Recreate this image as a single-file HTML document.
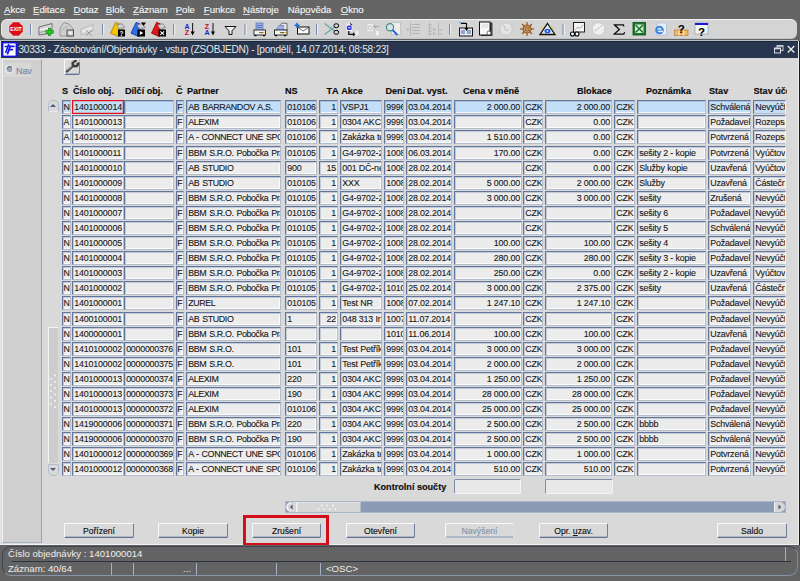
<!DOCTYPE html>
<html><head><meta charset="utf-8">
<style>
*{box-sizing:border-box;margin:0;padding:0}
html,body{width:800px;height:581px;overflow:hidden;background:#636363;font-family:"Liberation Sans",sans-serif;position:relative}
.abs{position:absolute}
#menubar{position:absolute;left:0;top:0;width:800px;height:19px;background:#656565}
.m{position:absolute;top:4px;font-size:9.6px;color:#f6f6f6;line-height:12px;white-space:nowrap;-webkit-text-stroke:0.12px #f6f6f6}
#toolbar{position:absolute;left:1px;top:19px;width:796px;height:20px;background:#d4d4d4;border-radius:6px;border-top:1px solid #f0f0f0;border-left:1px solid #e8e8e8;border-bottom:1px solid #c4c4c4}
#tbline{position:absolute;left:0;top:39px;width:798px;height:2px;background:#b6bdc5;border-top:1px solid #5d666c}
#win{position:absolute;left:0;top:41px;width:799px;height:504px;background:#d9d9d9;border-left:1px solid #e4e4e4}
#title{position:absolute;left:1px;top:41px;width:797px;height:17px;background:#28374f;border-top:1px solid #1c2434}
#ttext{position:absolute;left:18.5px;top:43px;font-size:10.1px;letter-spacing:-0.255px;color:#e6e6e6;line-height:13px;white-space:nowrap}
#ticon{position:absolute;left:3px;top:42px;width:14px;height:14px;background:#fff;border:1px solid #1a2ad0}
#rborder{position:absolute;left:798px;top:41px;width:2px;height:505px;background:#1a1a1a;border-left:1px solid #ececec}
#nav{position:absolute;left:2px;top:59px;width:40px;height:484px;background:#cfcfcf;border-left:1px solid #f4f4f4;border-right:1px solid #95a3b8;border-bottom:1px solid #a3afc2;border-top:1px solid #e4e4e4}
#wbot{position:absolute;left:0;top:544px;width:798px;height:1px;background:#f2f2f2}
#navbtn{position:absolute;left:4px;top:63px;width:27px;height:14px;background:#d8d8d8}
#navtxt{position:absolute;left:16px;top:64.5px;font-size:8.9px;color:#8090a8;line-height:12px;-webkit-text-stroke:0.25px #8090a8}
.h{position:absolute;top:85.5px;font-size:9.1px;font-weight:bold;color:#0c0c0c;line-height:11px;white-space:nowrap;-webkit-text-stroke:0.15px #0c0c0c}
.f{position:absolute;height:14px;background:#ececec;border-top:1px solid #62759a;border-left:1px solid #62759a;border-right:1px solid #b3bdcc;border-bottom:1px solid #b3bdcc;box-shadow:inset 1px 1px 0 #c3cbd8,inset -1px -1px 0 #fbfbfb;overflow:hidden;white-space:nowrap;font-size:8.9px;color:#161616;line-height:11px;-webkit-text-stroke:0.1px #161616;letter-spacing:-0.16px}
.f span{position:absolute;top:1.35px}
.f.l span{left:1.2px}
.f.r span{right:1px}
.f.c span{left:0;right:0;text-align:center}
.f.s{background:#c3dff7;box-shadow:inset 1px 1px 0 #a8bfd8,inset 0 -1px 0 #f4f8fc}
.f.red{border:1px solid #e4101c;box-shadow:inset 0 0 0 0.5px rgba(228,40,50,0.55)}
.h, .m{font-kerning:none}
#status{position:absolute;left:0;top:545px;width:800px;height:36px;background:#636363}
#spanel{position:absolute;left:2px;top:546px;width:796px;height:30px;border:1px solid #3d4350;border-radius:9px;border-bottom-color:#8794aa;border-right-color:#7f8ca3}
#sdiv{position:absolute;left:12px;top:561px;width:779px;height:1px;background:#2c3442}
.st{position:absolute;font-size:9.6px;color:#eeeeee;line-height:12px;white-space:nowrap}
.vs{position:absolute;width:1px;background:#a4b0c4}
.btn{position:absolute;top:523px;height:15px;background:#d9d9d9;border-top:1px solid #fafafa;border-left:1px solid #fafafa;border-right:1px solid #6f7f99;border-bottom:1px solid #62728e;box-shadow:inset 0 -1px 0 #aeb8c8;border-radius:1.5px;font-size:8.6px;color:#111;text-align:center;line-height:14px;white-space:nowrap;-webkit-text-stroke:0.15px #161616}
.btn.dis{color:#8696ad;-webkit-text-stroke:0.15px #8696ad;border-bottom:1px dotted #8a98ad;border-right:1px solid #e0e0e0}
#redbox{position:absolute;left:243px;top:515px;width:86px;height:31px;border:3px solid #d50d1b}
#sb{position:absolute;left:285px;top:501px;width:501px;height:12px;background:#8b9bb5}
#sbl{position:absolute;left:285px;top:501px;width:11px;height:12px;background:#d6d6d6;border-radius:6px 0 0 6px;border:1px solid #b0bac8}
#sbthumb{position:absolute;left:296px;top:501px;width:65px;height:12px;background:#d6d6d6;border-left:2px solid #f4f4f4;border-top:1px solid #e6e6e6}
#sbr{position:absolute;left:774px;top:501px;width:12px;height:12px;background:#d6d6d6;border-radius:0 6px 6px 0;border:1px solid #b0bac8}
.kf{position:absolute;top:479px;height:15px;background:#e8e8e8;border-top:1px solid #7d8ea9;border-left:1px solid #7d8ea9;border-right:1px solid #f6f6f6;border-bottom:1px solid #f6f6f6;border-radius:2px}
#vup{position:absolute;left:47.5px;top:100px;width:11px;height:12px;background:#d9d9d9;border:1px solid #b3bccb;border-radius:5px 5px 1px 1px;border-bottom-color:#e8e8e8}
#vupa{position:absolute;left:49.5px;top:103.5px;width:0;height:0;border-left:3.5px solid transparent;border-right:3.5px solid transparent;border-bottom:3.5px solid #4a5d7c}
#vdn{position:absolute;left:47.5px;top:464px;width:11px;height:12px;background:#d9d9d9;border:1px solid #b3bccb;border-radius:1px 1px 5px 5px}
#vdna{position:absolute;left:49.5px;top:468px;width:0;height:0;border-left:3.5px solid transparent;border-right:3.5px solid transparent;border-top:3.5px solid #4a5d7c}
#vthumb{position:absolute;left:48px;top:327px;width:10px;height:136px;background:#cdcdcd;border-top:1px solid #f4f4f4;border-left:1px solid #f4f4f4}
.m u{text-decoration:underline;text-decoration-color:#d8d8d8;text-underline-offset:1px}
#wrench{position:absolute;left:64px;top:59px;width:16px;height:16px;border-top:1px solid #fafafa;border-left:1px solid #fafafa;border-right:1px solid #6f7f99;border-bottom:1px solid #62728e;box-shadow:inset 0 -1px 0 #aeb8c8;border-radius:2px}
</style></head><body>
<div id="menubar"></div>
<div class="m" style="left:4px"><u>A</u>kce</div>
<div class="m" style="left:33px"><u>E</u>ditace</div>
<div class="m" style="left:73.6px"><u>D</u>otaz</div>
<div class="m" style="left:105.8px"><u>B</u>lok</div>
<div class="m" style="left:133px"><u>Z</u>áznam</div>
<div class="m" style="left:175.7px"><u>P</u>ole</div>
<div class="m" style="left:203.8px"><u>F</u>unkce</div>
<div class="m" style="left:243px"><u>N</u>ástroje</div>
<div class="m" style="left:287.7px">Náp<u>o</u>věda</div>
<div class="m" style="left:340.7px"><u>O</u>kno</div>
<div id="toolbar"></div>
<div id="tbline"></div>
<svg id="tbsvg" style="position:absolute;left:0;top:0" width="800" height="41" viewBox="0 0 800 41">
<!-- separators -->
<g fill="#7a8cb0">
<rect x="30" y="24" width="1.2" height="11"/><rect x="102" y="24" width="1.2" height="11"/><rect x="173" y="24" width="1.2" height="11"/><rect x="244.5" y="24" width="1.2" height="11"/><rect x="316" y="24" width="1.2" height="11"/><rect x="449" y="24" width="1.2" height="11"/><rect x="562.5" y="24" width="1.2" height="11"/>
</g>
<g fill="#f4f4f4">
<rect x="31.2" y="24" width="1" height="11"/><rect x="103.2" y="24" width="1" height="11"/><rect x="174.2" y="24" width="1" height="11"/><rect x="245.7" y="24" width="1" height="11"/><rect x="317.2" y="24" width="1" height="11"/><rect x="450.2" y="24" width="1" height="11"/><rect x="563.7" y="24" width="1" height="11"/>
</g>
<!-- EXIT -->
<polygon points="13.2,21.9 18.8,21.9 23,26.1 23,31.8 18.8,36 13.2,36 9,31.8 9,26.1" fill="#dc0e1c" stroke="#f2f2f2" stroke-width="0.5"/>
<text x="16" y="31" font-family="Liberation Sans" font-weight="bold" font-size="5.2" fill="#fff" text-anchor="middle">EXIT</text>
<!-- new record -->
<g>
<polygon points="39,27 52,23.5 52,33 39,35" fill="#d8d8d8" stroke="#6e6e6e" stroke-width="1"/>
<line x1="39.5" y1="30" x2="51.5" y2="27" stroke="#f8f8f8" stroke-width="1"/>
<line x1="39.5" y1="32.5" x2="51.5" y2="30" stroke="#8a8a8a" stroke-width="0.8"/>
<rect x="46" y="30.6" width="7.2" height="2.6" fill="#10a010" stroke="#0a5a0a" stroke-width="0.4"/>
<rect x="48.3" y="28" width="2.6" height="7.5" fill="#10a010" stroke="#0a5a0a" stroke-width="0.4"/>
<rect x="46.4" y="31" width="6.4" height="1.8" fill="#20d020"/><rect x="48.7" y="28.4" width="1.8" height="6.7" fill="#20d020"/>
</g>
<!-- delete record (disabled) -->
<g>
<polygon points="60,36 60,28 64,22.5 69,24 73,28.5 73,36" fill="#cfcfcf" stroke="#8f8f8f" stroke-width="0.9"/>
<line x1="61" y1="30" x2="68" y2="26" stroke="#a0a0a0" stroke-width="0.8"/>
<rect x="67" y="30" width="6.5" height="6" fill="#d0d0d0" stroke="#505050" stroke-width="1"/>
<polygon points="68.5,33 71.5,31 71.5,35" fill="#f8f8f8"/>
</g>
<!-- disabled 3 -->
<g stroke="#b8b8b8" fill="none" stroke-width="1">
<polygon points="81,29 93,24.5 93,31 81,35" fill="#dcdcdc"/>
<line x1="82" y1="31.5" x2="92" y2="28" stroke="#f6f6f6"/>
<line x1="86" y1="30" x2="92" y2="36" stroke="#9a9a9a"/><line x1="92" y1="30" x2="86" y2="36" stroke="#9a9a9a"/>
</g>
<!-- yellow folder -->
<g transform="translate(0,0)">
<polygon points="110.5,33.2 115.6,22.4 119.2,23.8 119.5,29.5 118.3,36.6" fill="#f4c400" stroke="#b07800" stroke-width="0.8"/>
<polygon points="116.8,24.8 121.8,23.6 124.6,27.4 119.3,29.6" fill="#c4c4c4" stroke="#6a6a6a" stroke-width="0.6"/>
<line x1="117.5" y1="26.6" x2="122.5" y2="25.6" stroke="#f4f4f4" stroke-width="0.6"/>
<rect x="118" y="29.5" width="7" height="7" fill="#000"/><text x="121.5" y="35.7" font-family="Liberation Sans" font-weight="bold" font-size="6.5" fill="#fff" text-anchor="middle">?</text>
</g>
<!-- blue folder -->
<g transform="translate(20.5,0)">
<polygon points="110.5,33.2 115.6,22.4 119.2,23.8 119.5,29.5 118.3,36.6" fill="#2a6ee8" stroke="#0c2aa0" stroke-width="0.8"/>
<polygon points="116.8,24.8 121.8,23.6 124.6,27.4 119.3,29.6" fill="#c4c4c4" stroke="#6a6a6a" stroke-width="0.6"/>
<line x1="117.5" y1="26.6" x2="122.5" y2="25.6" stroke="#f4f4f4" stroke-width="0.6"/>
<polygon points="120.5,22.5 125.5,22.5 123,26" fill="#000"/><rect x="117" y="29.5" width="7.5" height="7" fill="#000"/><polygon points="119.3,31 119.3,35 122.8,33" fill="#fff"/>
</g>
<!-- red folder -->
<g transform="translate(41,0)">
<polygon points="110.5,33.2 115.6,22.4 119.2,23.8 119.5,29.5 118.3,36.6" fill="#e41414" stroke="#8a0000" stroke-width="0.8"/>
<polygon points="116.8,24.8 121.8,23.6 124.6,27.4 119.3,29.6" fill="#c4c4c4" stroke="#6a6a6a" stroke-width="0.6"/>
<line x1="117.5" y1="26.6" x2="122.5" y2="25.6" stroke="#f4f4f4" stroke-width="0.6"/>
<rect x="117.5" y="29.5" width="7.5" height="7" fill="#000"/><path d="M119.3 31.3 L123.2 34.8 M123.2 31.3 L119.3 34.8" stroke="#fff" stroke-width="1.1"/>
</g>
<!-- AZ sort -->
<g font-family="Liberation Sans" font-weight="bold" font-size="7" text-anchor="middle">
<text x="187" y="29" fill="#1a2ab8">A</text>
<text x="187" y="35.1" fill="#c01010">Z</text>
<text x="207" y="29" fill="#c01010">Z</text>
<text x="207" y="35.1" fill="#1a2ab8">A</text>
</g>
<g fill="#000" stroke="#000">
<line x1="192.6" y1="23" x2="192.6" y2="33" stroke-width="0.9"/><polygon points="190.6,31.5 194.6,31.5 192.6,35.5" stroke="none"/>
<line x1="213" y1="23" x2="213" y2="33" stroke-width="0.9"/><polygon points="211,31.5 215,31.5 213,35.5" stroke="none"/>
</g>
<!-- filter -->
<polygon points="225,26.5 236,26.5 232,30.8 232,34.5 229,34.5 229,30.8" fill="#f4f4f4" stroke="#111" stroke-width="1"/>
<!-- printer -->
<g>
<rect x="256" y="23" width="7" height="7.5" fill="#9cb0e8" stroke="#5060a0" stroke-width="0.6"/>
<line x1="257" y1="25.5" x2="262" y2="25.5" stroke="#3848a0" stroke-width="0.6"/><line x1="257" y1="27.5" x2="262" y2="27.5" stroke="#3848a0" stroke-width="0.6"/>
<rect x="254" y="30" width="11.5" height="5" fill="#f4f4f4" stroke="#202020" stroke-width="0.9"/>
<rect x="259" y="32" width="1.8" height="1.2" fill="#20b020"/><rect x="261" y="32" width="1.8" height="1.2" fill="#e02020"/><rect x="263" y="32" width="1.5" height="1.2" fill="#e0c000"/>
<rect x="254.5" y="35" width="2" height="1.2" fill="#000"/><rect x="263" y="35" width="2" height="1.2" fill="#000"/>
</g>
<!-- printer 2 -->
<g>
<polygon points="277,30 282,23 287,23.5 287,30" fill="#e8e8e8" stroke="#404040" stroke-width="0.7"/>
<polygon points="276,30 279,25.5 284,25.5 283,30" fill="#9cb0e8" stroke="#5060a0" stroke-width="0.5"/>
<rect x="274.5" y="30" width="12.5" height="5" fill="#f4f4f4" stroke="#202020" stroke-width="0.9"/>
<rect x="280" y="32" width="2" height="1.2" fill="#20b020"/><rect x="282" y="32" width="2" height="1.2" fill="#e02020"/><rect x="284" y="32" width="2" height="1.2" fill="#e0c000"/>
<rect x="275" y="35" width="2" height="1.2" fill="#000"/><rect x="284" y="35" width="2" height="1.2" fill="#000"/>
</g>
<!-- mail -->
<g>
<rect x="297.5" y="27" width="11.5" height="7" fill="#fafafa" stroke="#111" stroke-width="1"/>
<polyline points="298,27.5 303.2,31 308.5,27.5" fill="none" stroke="#333" stroke-width="0.7"/>
<rect x="294.5" y="24.5" width="5" height="1.6" fill="#1a6ae0"/><rect x="296.2" y="22.8" width="1.6" height="5" fill="#1a6ae0"/>
</g>
<!-- scissors -->
<g>
<line x1="324.5" y1="23.5" x2="334" y2="30.5" stroke="#6aa8a8" stroke-width="1.4"/>
<line x1="324.5" y1="34.5" x2="334" y2="27.5" stroke="#6aa8a8" stroke-width="1.4"/>
<ellipse cx="336.3" cy="25.7" rx="2.4" ry="2" fill="none" stroke="#000" stroke-width="1"/>
<ellipse cx="336.3" cy="32.3" rx="2.4" ry="2" fill="none" stroke="#000" stroke-width="1"/>
</g>
<!-- copy -->
<g>
<rect x="346.3" y="23.3" width="6" height="8" fill="#f4f4fa" stroke="#d8d8e8" stroke-width="0.5"/>
<rect x="347" y="25.5" width="4.6" height="4.6" rx="1.6" fill="#2222f0"/>
<rect x="348.2" y="27.2" width="2.3" height="1.2" fill="#f0f0ff"/>
<polygon points="350,22.5 352.5,25 350.8,25.5" fill="#111"/>
<path d="M348.8 31 L348.8 34.3 L353.5 34.3" fill="none" stroke="#111" stroke-width="1.3"/>
<polygon points="353,32.2 355.6,34.3 353,36.4" fill="#111"/>
<rect x="355.3" y="30.5" width="3.6" height="5" rx="1" fill="#f2f2f2" stroke="#d0d0d0" stroke-width="0.5"/>
</g>
<!-- paste disabled -->
<g>
<rect x="367" y="23.3" width="6.2" height="8.5" fill="#f0f0f0" stroke="#c8c8c8" stroke-width="0.6"/>
<rect x="368.3" y="26" width="3.6" height="3.5" rx="1.2" fill="none" stroke="#b4b4b4" stroke-width="0.8"/>
<path d="M379 26.5 L374.5 26.5" stroke="#a8a8a8" stroke-width="1.1"/>
<polygon points="375.5,24.6 373.3,26.5 375.5,28.4" fill="#a8a8a8"/>
<rect x="375.5" y="30.5" width="3.8" height="5.2" rx="1" fill="#f2f2f2" stroke="#c8c8c8" stroke-width="0.5"/>
</g>
<!-- search -->
<g>
<rect x="391.5" y="22.5" width="9" height="12" fill="#ececec" stroke="#b8b8b8" stroke-width="0.7"/>
<circle cx="390" cy="27.2" r="3.6" fill="#d4e6e6" stroke="#4a8a8a" stroke-width="1.2"/>
<line x1="392.5" y1="30" x2="397.5" y2="35" stroke="#1a60e0" stroke-width="1.8"/>
</g>
<!-- disabled list -->
<g stroke="#b2b2b2" stroke-width="0.9">
<line x1="410.5" y1="22.5" x2="410.5" y2="36"/>
<line x1="412" y1="24.5" x2="420" y2="24.5"/><line x1="412" y1="27.5" x2="420" y2="27.5"/><line x1="412" y1="30.5" x2="420" y2="30.5"/><line x1="412" y1="33.5" x2="420" y2="33.5"/>
<polygon points="407,28 409.5,29.5 407,31" fill="#b2b2b2" stroke="none"/>
</g>
<!-- disabled tree -->
<g stroke="#b6b6b6" stroke-width="0.9">
<line x1="429.5" y1="22.5" x2="429.5" y2="36"/><line x1="438.5" y1="22.5" x2="438.5" y2="36"/>
<line x1="428" y1="25" x2="432" y2="25"/><line x1="428" y1="28" x2="432" y2="28"/><line x1="428" y1="31" x2="432" y2="31"/><line x1="428" y1="34" x2="432" y2="34"/>
<polygon points="433,28 436,29.5 433,31" fill="#b0b0b0" stroke="none"/><polygon points="433,32 436,33.5 433,35" fill="#b0b0b0" stroke="none"/>
<line x1="439" y1="30" x2="442" y2="30"/><line x1="439" y1="34" x2="442" y2="34"/>
</g>
<!-- import -->
<g>
<rect x="459.5" y="28" width="13" height="8" fill="#e8e8f4" stroke="#111" stroke-width="1"/>
<rect x="461" y="30" width="4" height="4" fill="#90a8c8"/><rect x="467" y="30" width="4" height="4" fill="#90a8c8"/>
<line x1="459" y1="22.5" x2="466" y2="22.5" stroke="#5a9ae0" stroke-width="0.8"/>
<path d="M461 23.5 L466.5 23.5 L466.5 29" fill="none" stroke="#000" stroke-width="1.1"/>
<polygon points="464.5,28 468.5,28 466.5,31" fill="#000"/>
</g>
<!-- document -->
<g>
<rect x="481" y="22.5" width="11.5" height="13.5" fill="#404040"/>
<rect x="479.5" y="22" width="10.5" height="13" fill="#f8f8f8" stroke="#111" stroke-width="1"/>
<line x1="481.5" y1="25" x2="488" y2="25" stroke="#c0c0c0" stroke-width="0.6"/><line x1="481.5" y1="27" x2="488" y2="27" stroke="#c0c0c0" stroke-width="0.6"/>
<circle cx="489" cy="33" r="2" fill="#fff" stroke="#333" stroke-width="0.7"/>
</g>
<!-- globe disabled -->
<circle cx="506" cy="29" r="6.2" fill="#e4e4e4" stroke="#c0c0c0" stroke-width="0.8"/>
<path d="M503 25 Q506 27 505 30 Q507 32 509 29" fill="none" stroke="#b0b0b0" stroke-width="0.8"/>
<!-- ship wheel -->
<g stroke="#9a5a1a" stroke-width="1.2" fill="none">
<circle cx="527" cy="29" r="4"/>
<line x1="520" y1="29" x2="534" y2="29"/><line x1="527" y1="22" x2="527" y2="36"/>
<line x1="522" y1="24" x2="532" y2="34"/><line x1="532" y1="24" x2="522" y2="34"/>
</g>
<circle cx="527" cy="29" r="1.5" fill="#d08a40"/>
<!-- eye pyramid -->
<g>
<line x1="541" y1="27" x2="543" y2="28.5" stroke="#e8d000" stroke-width="1"/><line x1="554" y1="27" x2="552" y2="28.5" stroke="#e8d000" stroke-width="1"/>
<polygon points="547.5,23.5 555,34.5 540,34.5" fill="#e8e8e8" stroke="#101010" stroke-width="1.3"/>
<ellipse cx="547.5" cy="31" rx="3" ry="2.3" fill="#1a58f0"/>
<circle cx="547.5" cy="31" r="1" fill="#bfe0ff"/>
</g>
<!-- chart glasses -->
<g>
<rect x="573.5" y="22.5" width="11" height="9.5" fill="#f4f4f4" stroke="#202020" stroke-width="1"/>
<polyline points="575,30 578,27 580,28.5 583,24.5" fill="none" stroke="#909090" stroke-width="0.7"/>
<circle cx="572.5" cy="34" r="2" fill="#fff" stroke="#000" stroke-width="1.1"/>
<circle cx="577" cy="34" r="2" fill="#fff" stroke="#000" stroke-width="1.1"/>
</g>
<!-- disabled chart -->
<circle cx="598.5" cy="29" r="6.3" fill="#f0f0f0" stroke="#c6c6c6" stroke-width="0.8"/>
<polyline points="594,31 598,29 602,25" fill="none" stroke="#b8b8b8" stroke-width="0.8"/>
<!-- sigma -->
<path d="M613.5 24.3 L624 24.3 L624.4 26.6 L623.4 26.6 L622.6 25.4 L616.3 25.4 L620.3 29.6 L615.8 33.6 L623.2 33.6 L624.4 32 L625.2 32 L624.3 34.7 L613.3 34.7 L613.3 34 L618.4 29.5 L613.5 24.9 Z" fill="#101010"/>
<!-- excel -->
<g>
<rect x="633" y="22.5" width="12.5" height="12.5" fill="#1c7a2c" stroke="#0a4a14" stroke-width="0.8"/>
<rect x="635" y="24.5" width="8.5" height="8.5" fill="#d8ecd8"/>
<path d="M635.5 25 L643 32.5 M643 25 L635.5 32.5" stroke="#1c7a2c" stroke-width="1.6"/>
</g>
<!-- IE -->
<g>
<rect x="657" y="23" width="9.5" height="12" fill="#e8eef8" stroke="#a0b0d0" stroke-width="0.6"/>
<circle cx="659.5" cy="30" r="4.3" fill="#3a86e0"/>
<circle cx="659.5" cy="30" r="2.2" fill="#e0ecff"/>
<rect x="657" y="29.6" width="5" height="1.1" fill="#3a86e0"/>
<rect x="659" y="30.7" width="4" height="1.4" fill="#e0ecff"/>
</g>
<!-- help lock -->
<g>
<rect x="674.5" y="30" width="13.5" height="5.5" fill="#f0b860" stroke="#b07020" stroke-width="0.6"/>
<rect x="678.5" y="30.5" width="1.2" height="5" fill="#e8e8e8"/><rect x="683" y="30.5" width="1.2" height="5" fill="#e8e8e8"/>
<text x="681.3" y="33" font-family="Liberation Sans" font-weight="bold" font-size="11.5" fill="#000" text-anchor="middle">?</text>
</g>
<!-- help window -->
<g>
<rect x="695" y="23" width="13" height="11" fill="#f4f4f4" stroke="#8090b0" stroke-width="0.6"/>
<rect x="695" y="23" width="13" height="2" fill="#1a1ad0"/>
<text x="701.5" y="36" font-family="Liberation Sans" font-weight="bold" font-size="11.5" fill="#000" text-anchor="middle">?</text>
</g>
</svg>

<div id="win"></div>
<div id="title"></div>

<svg style="position:absolute;left:2px;top:42px" width="15" height="15" viewBox="0 0 15 15"><rect x="0.7" y="0.7" width="13.6" height="13.6" fill="#fdfdfd" stroke="#1414e0" stroke-width="1.4"/><g stroke="#1818e8" stroke-linecap="round" fill="none"><path d="M3.2 4.5 L6 4.5" stroke-width="1.5"/><path d="M6.6 2.6 L3.8 10.2" stroke-width="1.6"/><path d="M8.2 4.2 L5.6 11.6" stroke-width="1.9"/><path d="M7.6 4.3 L12 4.3" stroke-width="1.7"/><path d="M7 7.6 L10.6 7.6" stroke-width="1.6"/></g></svg>
<div id="ttext">30333 - Zásobování/Objednávky - vstup (ZSOBJEDN) - [pondělí, 14.07.2014; 08:58:23]</div>
<div id="rborder"></div>
<svg style="position:absolute;left:772px;top:43px" width="26" height="13" viewBox="0 0 26 13"><rect x="5" y="2.5" width="6" height="5" fill="none" stroke="#c8ccd4" stroke-width="1"/><rect x="5" y="2.5" width="6" height="1.3" fill="#c8ccd4"/><rect x="2.5" y="5" width="6" height="5" fill="#28374f" stroke="#d8dce4" stroke-width="1"/><rect x="2.5" y="5" width="6" height="1.3" fill="#d8dce4"/><path d="M15.8 3 L22.3 9.5 M22.3 3 L15.8 9.5" stroke="#f0f0f0" stroke-width="1.3"/></svg>
<div id="nav"></div><div id="wbot"></div>
<div id="navbtn"></div>
<div id="navtxt">Nav</div>
<svg style="position:absolute;left:4px;top:63px" width="12" height="14" viewBox="0 0 12 14"><circle cx="5.5" cy="6.5" r="3.6" fill="#9aa6b8" stroke="#f2f2f2" stroke-width="1.2"/><path d="M3 5.5 A3 3 0 0 1 8 4.5" stroke="#3c4a66" stroke-width="1" fill="none"/></svg>
<div id="wrench"></div>
<svg style="position:absolute;left:64px;top:58px" width="17" height="17" viewBox="0 0 17 17"><path d="M3 13.3 L9.2 7.6" stroke="#484848" stroke-width="2.6" stroke-linecap="round"/><path d="M3.2 12.2 L8.4 7.3" stroke="#f0f0f0" stroke-width="0.8"/><circle cx="11.3" cy="5.6" r="3.9" fill="#3c3c3c"/><polygon points="11.3,5.6 13.8,1 16.5,3.5" fill="#d9d9d9"/><circle cx="11.2" cy="5.7" r="1.3" fill="#d9d9d9"/><path d="M8 4 A3.6 3.6 0 0 1 10.2 2.1" stroke="#e8e8e8" stroke-width="0.8" fill="none"/></svg>
<div class="h" style="left:62px">S</div>
<div class="h" style="left:73px">Číslo obj.</div>
<div class="h" style="left:125px">Dílčí obj.</div>
<div class="h" style="left:176px">Č</div>
<div class="h" style="left:187px">Partner</div>
<div class="h" style="left:285px">NS</div>
<div class="h" style="left:326.5px">TA Akce</div>
<div class="h" style="left:385.5px">Deni</div>
<div class="h" style="left:407px">Dat. vyst.</div>
<div class="h" style="left:463px">Cena v měně</div>
<div class="h" style="left:577px">Blokace</div>
<div class="h" style="left:646px">Poznámka</div>
<div class="h" style="left:709px">Stav</div>
<div class="h" style="left:753.5px;width:33px;overflow:hidden">Stav účet</div>
<div id="vup"></div><div id="vupa"></div>
<div id="vthumb"></div>
<svg style="position:absolute;left:47px;top:320px" width="12" height="100" viewBox="0 0 12 100"><g fill="#fafafa"><circle cx="8" cy="55.5" r="0.9"/><circle cx="4" cy="58.6" r="0.9"/><circle cx="8" cy="61.8" r="0.9"/><circle cx="4" cy="64.9" r="0.9"/><circle cx="8" cy="68.1" r="0.9"/><circle cx="4" cy="71.2" r="0.9"/><circle cx="8" cy="74.4" r="0.9"/><circle cx="4" cy="77.5" r="0.9"/><circle cx="8" cy="80.7" r="0.9"/><circle cx="4" cy="83.8" r="0.9"/><circle cx="8" cy="87.0" r="0.9"/></g></svg><div id="vdn"></div><div id="vdna"></div>
<div class="f s c" style="left:62px;top:100px;width:9px"><span>N</span></div>
<div class="f s red l" style="left:72px;top:100px;width:52px"><span>1401000014</span></div>
<div class="f s l" style="left:124px;top:100px;width:50px;letter-spacing:-0.26px"><span></span></div>
<div class="f s c" style="left:176px;top:100px;width:8px"><span>F</span></div>
<div class="f s l" style="left:186px;top:100px;width:95px;letter-spacing:-0.38px;word-spacing:0.8px"><span>AB BARRANDOV A.S.</span></div>
<div class="f s l" style="left:285px;top:100px;width:32px"><span>010106</span></div>
<div class="f s r" style="left:319px;top:100px;width:19px"><span>1</span></div>
<div class="f s l" style="left:340px;top:100px;width:42px"><span>VSPJ1</span></div>
<div class="f s l" style="left:384px;top:100px;width:20px"><span>9996</span></div>
<div class="f s l" style="left:406px;top:100px;width:46px"><span>03.04.2014</span></div>
<div class="f s r" style="left:454px;top:100px;width:68px"><span>2 000.00</span></div>
<div class="f s l" style="left:523px;top:100px;width:20px"><span>CZK</span></div>
<div class="f s r" style="left:545px;top:100px;width:67px"><span>2 000.00</span></div>
<div class="f s l" style="left:614px;top:100px;width:21px"><span>CZK</span></div>
<div class="f s l" style="left:637px;top:100px;width:69px"><span></span></div>
<div class="f s l" style="left:708px;top:100px;width:43px"><span>Schválená</span></div>
<div class="f s l" style="left:753px;top:100px;width:33px;border-right:1px solid #f4f4f4;box-shadow:inset 1px 1px 0 #c3cbd8"><span>Nevyúčt</span></div>
<div class="f c" style="left:62px;top:115px;width:9px"><span>A</span></div>
<div class="f l" style="left:72px;top:115px;width:52px"><span>1401000013</span></div>
<div class="f l" style="left:124px;top:115px;width:50px;letter-spacing:-0.26px"><span></span></div>
<div class="f c" style="left:176px;top:115px;width:8px"><span>F</span></div>
<div class="f l" style="left:186px;top:115px;width:95px;letter-spacing:-0.38px;word-spacing:0.8px"><span>ALEXIM</span></div>
<div class="f l" style="left:285px;top:115px;width:32px"><span>010106</span></div>
<div class="f r" style="left:319px;top:115px;width:19px"><span>1</span></div>
<div class="f l" style="left:340px;top:115px;width:42px"><span>0304 AKCE</span></div>
<div class="f l" style="left:384px;top:115px;width:20px"><span>9999</span></div>
<div class="f l" style="left:406px;top:115px;width:46px"><span>03.04.2014</span></div>
<div class="f r" style="left:454px;top:115px;width:68px"><span></span></div>
<div class="f l" style="left:523px;top:115px;width:20px"><span>CZK</span></div>
<div class="f r" style="left:545px;top:115px;width:67px"><span>0.00</span></div>
<div class="f l" style="left:614px;top:115px;width:21px"><span>CZK</span></div>
<div class="f l" style="left:637px;top:115px;width:69px"><span></span></div>
<div class="f l" style="left:708px;top:115px;width:43px"><span>Požadavek</span></div>
<div class="f l" style="left:753px;top:115px;width:33px;border-right:1px solid #f4f4f4;box-shadow:inset 1px 1px 0 #c3cbd8"><span>Rozepsá</span></div>
<div class="f c" style="left:62px;top:130px;width:9px"><span>A</span></div>
<div class="f l" style="left:72px;top:130px;width:52px"><span>1401000012</span></div>
<div class="f l" style="left:124px;top:130px;width:50px;letter-spacing:-0.26px"><span></span></div>
<div class="f c" style="left:176px;top:130px;width:8px"><span>F</span></div>
<div class="f l" style="left:186px;top:130px;width:95px;letter-spacing:-0.38px;word-spacing:0.8px"><span>A - CONNECT UNE SPOL</span></div>
<div class="f l" style="left:285px;top:130px;width:32px"><span>010106</span></div>
<div class="f r" style="left:319px;top:130px;width:19px"><span>1</span></div>
<div class="f l" style="left:340px;top:130px;width:42px"><span>Zakázka test</span></div>
<div class="f l" style="left:384px;top:130px;width:20px"><span>9999</span></div>
<div class="f l" style="left:406px;top:130px;width:46px"><span>03.04.2014</span></div>
<div class="f r" style="left:454px;top:130px;width:68px"><span>1 510.00</span></div>
<div class="f l" style="left:523px;top:130px;width:20px"><span>CZK</span></div>
<div class="f r" style="left:545px;top:130px;width:67px"><span>0.00</span></div>
<div class="f l" style="left:614px;top:130px;width:21px"><span>CZK</span></div>
<div class="f l" style="left:637px;top:130px;width:69px"><span></span></div>
<div class="f l" style="left:708px;top:130px;width:43px"><span>Potvrzená</span></div>
<div class="f l" style="left:753px;top:130px;width:33px;border-right:1px solid #f4f4f4;box-shadow:inset 1px 1px 0 #c3cbd8"><span>Rozepsá</span></div>
<div class="f c" style="left:62px;top:146px;width:9px"><span>N</span></div>
<div class="f l" style="left:72px;top:146px;width:52px"><span>1401000011</span></div>
<div class="f l" style="left:124px;top:146px;width:50px;letter-spacing:-0.26px"><span></span></div>
<div class="f c" style="left:176px;top:146px;width:8px"><span>F</span></div>
<div class="f l" style="left:186px;top:146px;width:95px;letter-spacing:-0.38px;word-spacing:0.8px"><span>BBM S.R.O. Pobočka Praha</span></div>
<div class="f l" style="left:285px;top:146px;width:32px"><span>010105</span></div>
<div class="f r" style="left:319px;top:146px;width:19px"><span>1</span></div>
<div class="f l" style="left:340px;top:146px;width:42px"><span>G4-9702-2</span></div>
<div class="f l" style="left:384px;top:146px;width:20px"><span>1008</span></div>
<div class="f l" style="left:406px;top:146px;width:46px"><span>06.03.2014</span></div>
<div class="f r" style="left:454px;top:146px;width:68px"><span>170.00</span></div>
<div class="f l" style="left:523px;top:146px;width:20px"><span>CZK</span></div>
<div class="f r" style="left:545px;top:146px;width:67px"><span>0.00</span></div>
<div class="f l" style="left:614px;top:146px;width:21px"><span>CZK</span></div>
<div class="f l" style="left:637px;top:146px;width:69px"><span>sešity 2 - kopie</span></div>
<div class="f l" style="left:708px;top:146px;width:43px"><span>Potvrzená</span></div>
<div class="f l" style="left:753px;top:146px;width:33px;border-right:1px solid #f4f4f4;box-shadow:inset 1px 1px 0 #c3cbd8"><span>Vyúčtov</span></div>
<div class="f c" style="left:62px;top:161px;width:9px"><span>N</span></div>
<div class="f l" style="left:72px;top:161px;width:52px"><span>1401000010</span></div>
<div class="f l" style="left:124px;top:161px;width:50px;letter-spacing:-0.26px"><span></span></div>
<div class="f c" style="left:176px;top:161px;width:8px"><span>F</span></div>
<div class="f l" style="left:186px;top:161px;width:95px;letter-spacing:-0.38px;word-spacing:0.8px"><span>AB STUDIO</span></div>
<div class="f l" style="left:285px;top:161px;width:32px"><span>900</span></div>
<div class="f r" style="left:319px;top:161px;width:19px"><span>15</span></div>
<div class="f l" style="left:340px;top:161px;width:42px"><span>001 DČ-ne</span></div>
<div class="f l" style="left:384px;top:161px;width:20px"><span>1008</span></div>
<div class="f l" style="left:406px;top:161px;width:46px"><span>28.02.2014</span></div>
<div class="f r" style="left:454px;top:161px;width:68px"><span></span></div>
<div class="f l" style="left:523px;top:161px;width:20px"><span>CZK</span></div>
<div class="f r" style="left:545px;top:161px;width:67px"><span>0.00</span></div>
<div class="f l" style="left:614px;top:161px;width:21px"><span>CZK</span></div>
<div class="f l" style="left:637px;top:161px;width:69px"><span>Služby kopie</span></div>
<div class="f l" style="left:708px;top:161px;width:43px"><span>Uzavřená</span></div>
<div class="f l" style="left:753px;top:161px;width:33px;border-right:1px solid #f4f4f4;box-shadow:inset 1px 1px 0 #c3cbd8"><span>Vyúčtov</span></div>
<div class="f c" style="left:62px;top:176px;width:9px"><span>N</span></div>
<div class="f l" style="left:72px;top:176px;width:52px"><span>1401000009</span></div>
<div class="f l" style="left:124px;top:176px;width:50px;letter-spacing:-0.26px"><span></span></div>
<div class="f c" style="left:176px;top:176px;width:8px"><span>F</span></div>
<div class="f l" style="left:186px;top:176px;width:95px;letter-spacing:-0.38px;word-spacing:0.8px"><span>AB STUDIO</span></div>
<div class="f l" style="left:285px;top:176px;width:32px"><span>010105</span></div>
<div class="f r" style="left:319px;top:176px;width:19px"><span>1</span></div>
<div class="f l" style="left:340px;top:176px;width:42px"><span>XXX</span></div>
<div class="f l" style="left:384px;top:176px;width:20px"><span>1008</span></div>
<div class="f l" style="left:406px;top:176px;width:46px"><span>28.02.2014</span></div>
<div class="f r" style="left:454px;top:176px;width:68px"><span>5 000.00</span></div>
<div class="f l" style="left:523px;top:176px;width:20px"><span>CZK</span></div>
<div class="f r" style="left:545px;top:176px;width:67px"><span>2 000.00</span></div>
<div class="f l" style="left:614px;top:176px;width:21px"><span>CZK</span></div>
<div class="f l" style="left:637px;top:176px;width:69px"><span>Služby</span></div>
<div class="f l" style="left:708px;top:176px;width:43px"><span>Uzavřená</span></div>
<div class="f l" style="left:753px;top:176px;width:33px;border-right:1px solid #f4f4f4;box-shadow:inset 1px 1px 0 #c3cbd8"><span>Částečn</span></div>
<div class="f c" style="left:62px;top:191px;width:9px"><span>N</span></div>
<div class="f l" style="left:72px;top:191px;width:52px"><span>1401000008</span></div>
<div class="f l" style="left:124px;top:191px;width:50px;letter-spacing:-0.26px"><span></span></div>
<div class="f c" style="left:176px;top:191px;width:8px"><span>F</span></div>
<div class="f l" style="left:186px;top:191px;width:95px;letter-spacing:-0.38px;word-spacing:0.8px"><span>BBM S.R.O. Pobočka Praha</span></div>
<div class="f l" style="left:285px;top:191px;width:32px"><span>010105</span></div>
<div class="f r" style="left:319px;top:191px;width:19px"><span>1</span></div>
<div class="f l" style="left:340px;top:191px;width:42px"><span>G4-9702-2</span></div>
<div class="f l" style="left:384px;top:191px;width:20px"><span>1008</span></div>
<div class="f l" style="left:406px;top:191px;width:46px"><span>28.02.2014</span></div>
<div class="f r" style="left:454px;top:191px;width:68px"><span>3 000.00</span></div>
<div class="f l" style="left:523px;top:191px;width:20px"><span>CZK</span></div>
<div class="f r" style="left:545px;top:191px;width:67px"><span>3 000.00</span></div>
<div class="f l" style="left:614px;top:191px;width:21px"><span>CZK</span></div>
<div class="f l" style="left:637px;top:191px;width:69px"><span>sešity</span></div>
<div class="f l" style="left:708px;top:191px;width:43px"><span>Zrušená</span></div>
<div class="f l" style="left:753px;top:191px;width:33px;border-right:1px solid #f4f4f4;box-shadow:inset 1px 1px 0 #c3cbd8"><span>Nevyúčt</span></div>
<div class="f c" style="left:62px;top:206px;width:9px"><span>N</span></div>
<div class="f l" style="left:72px;top:206px;width:52px"><span>1401000007</span></div>
<div class="f l" style="left:124px;top:206px;width:50px;letter-spacing:-0.26px"><span></span></div>
<div class="f c" style="left:176px;top:206px;width:8px"><span>F</span></div>
<div class="f l" style="left:186px;top:206px;width:95px;letter-spacing:-0.38px;word-spacing:0.8px"><span>BBM S.R.O. Pobočka Praha</span></div>
<div class="f l" style="left:285px;top:206px;width:32px"><span>010105</span></div>
<div class="f r" style="left:319px;top:206px;width:19px"><span>1</span></div>
<div class="f l" style="left:340px;top:206px;width:42px"><span>G4-9702-2</span></div>
<div class="f l" style="left:384px;top:206px;width:20px"><span>1008</span></div>
<div class="f l" style="left:406px;top:206px;width:46px"><span>28.02.2014</span></div>
<div class="f r" style="left:454px;top:206px;width:68px"><span></span></div>
<div class="f l" style="left:523px;top:206px;width:20px"><span>CZK</span></div>
<div class="f r" style="left:545px;top:206px;width:67px"><span></span></div>
<div class="f l" style="left:614px;top:206px;width:21px"><span>CZK</span></div>
<div class="f l" style="left:637px;top:206px;width:69px"><span>sešity 6</span></div>
<div class="f l" style="left:708px;top:206px;width:43px"><span>Požadavek</span></div>
<div class="f l" style="left:753px;top:206px;width:33px;border-right:1px solid #f4f4f4;box-shadow:inset 1px 1px 0 #c3cbd8"><span>Nevyúčt</span></div>
<div class="f c" style="left:62px;top:221px;width:9px"><span>N</span></div>
<div class="f l" style="left:72px;top:221px;width:52px"><span>1401000006</span></div>
<div class="f l" style="left:124px;top:221px;width:50px;letter-spacing:-0.26px"><span></span></div>
<div class="f c" style="left:176px;top:221px;width:8px"><span>F</span></div>
<div class="f l" style="left:186px;top:221px;width:95px;letter-spacing:-0.38px;word-spacing:0.8px"><span>BBM S.R.O. Pobočka Praha</span></div>
<div class="f l" style="left:285px;top:221px;width:32px"><span>010105</span></div>
<div class="f r" style="left:319px;top:221px;width:19px"><span>1</span></div>
<div class="f l" style="left:340px;top:221px;width:42px"><span>G4-9702-2</span></div>
<div class="f l" style="left:384px;top:221px;width:20px"><span>1008</span></div>
<div class="f l" style="left:406px;top:221px;width:46px"><span>28.02.2014</span></div>
<div class="f r" style="left:454px;top:221px;width:68px"><span></span></div>
<div class="f l" style="left:523px;top:221px;width:20px"><span>CZK</span></div>
<div class="f r" style="left:545px;top:221px;width:67px"><span></span></div>
<div class="f l" style="left:614px;top:221px;width:21px"><span>CZK</span></div>
<div class="f l" style="left:637px;top:221px;width:69px"><span>sešity 5</span></div>
<div class="f l" style="left:708px;top:221px;width:43px"><span>Schválená</span></div>
<div class="f l" style="left:753px;top:221px;width:33px;border-right:1px solid #f4f4f4;box-shadow:inset 1px 1px 0 #c3cbd8"><span>Nevyúčt</span></div>
<div class="f c" style="left:62px;top:236px;width:9px"><span>N</span></div>
<div class="f l" style="left:72px;top:236px;width:52px"><span>1401000005</span></div>
<div class="f l" style="left:124px;top:236px;width:50px;letter-spacing:-0.26px"><span></span></div>
<div class="f c" style="left:176px;top:236px;width:8px"><span>F</span></div>
<div class="f l" style="left:186px;top:236px;width:95px;letter-spacing:-0.38px;word-spacing:0.8px"><span>BBM S.R.O. Pobočka Praha</span></div>
<div class="f l" style="left:285px;top:236px;width:32px"><span>010105</span></div>
<div class="f r" style="left:319px;top:236px;width:19px"><span>1</span></div>
<div class="f l" style="left:340px;top:236px;width:42px"><span>G4-9702-2</span></div>
<div class="f l" style="left:384px;top:236px;width:20px"><span>1008</span></div>
<div class="f l" style="left:406px;top:236px;width:46px"><span>28.02.2014</span></div>
<div class="f r" style="left:454px;top:236px;width:68px"><span>100.00</span></div>
<div class="f l" style="left:523px;top:236px;width:20px"><span>CZK</span></div>
<div class="f r" style="left:545px;top:236px;width:67px"><span>100.00</span></div>
<div class="f l" style="left:614px;top:236px;width:21px"><span>CZK</span></div>
<div class="f l" style="left:637px;top:236px;width:69px"><span>sešity 4</span></div>
<div class="f l" style="left:708px;top:236px;width:43px"><span>Požadavek</span></div>
<div class="f l" style="left:753px;top:236px;width:33px;border-right:1px solid #f4f4f4;box-shadow:inset 1px 1px 0 #c3cbd8"><span>Nevyúčt</span></div>
<div class="f c" style="left:62px;top:251px;width:9px"><span>N</span></div>
<div class="f l" style="left:72px;top:251px;width:52px"><span>1401000004</span></div>
<div class="f l" style="left:124px;top:251px;width:50px;letter-spacing:-0.26px"><span></span></div>
<div class="f c" style="left:176px;top:251px;width:8px"><span>F</span></div>
<div class="f l" style="left:186px;top:251px;width:95px;letter-spacing:-0.38px;word-spacing:0.8px"><span>BBM S.R.O. Pobočka Praha</span></div>
<div class="f l" style="left:285px;top:251px;width:32px"><span>010105</span></div>
<div class="f r" style="left:319px;top:251px;width:19px"><span>1</span></div>
<div class="f l" style="left:340px;top:251px;width:42px"><span>G4-9702-2</span></div>
<div class="f l" style="left:384px;top:251px;width:20px"><span>1008</span></div>
<div class="f l" style="left:406px;top:251px;width:46px"><span>28.02.2014</span></div>
<div class="f r" style="left:454px;top:251px;width:68px"><span>280.00</span></div>
<div class="f l" style="left:523px;top:251px;width:20px"><span>CZK</span></div>
<div class="f r" style="left:545px;top:251px;width:67px"><span>280.00</span></div>
<div class="f l" style="left:614px;top:251px;width:21px"><span>CZK</span></div>
<div class="f l" style="left:637px;top:251px;width:69px"><span>sešity 3 - kopie</span></div>
<div class="f l" style="left:708px;top:251px;width:43px"><span>Požadavek</span></div>
<div class="f l" style="left:753px;top:251px;width:33px;border-right:1px solid #f4f4f4;box-shadow:inset 1px 1px 0 #c3cbd8"><span>Nevyúčt</span></div>
<div class="f c" style="left:62px;top:266px;width:9px"><span>N</span></div>
<div class="f l" style="left:72px;top:266px;width:52px"><span>1401000003</span></div>
<div class="f l" style="left:124px;top:266px;width:50px;letter-spacing:-0.26px"><span></span></div>
<div class="f c" style="left:176px;top:266px;width:8px"><span>F</span></div>
<div class="f l" style="left:186px;top:266px;width:95px;letter-spacing:-0.38px;word-spacing:0.8px"><span>BBM S.R.O. Pobočka Praha</span></div>
<div class="f l" style="left:285px;top:266px;width:32px"><span>010105</span></div>
<div class="f r" style="left:319px;top:266px;width:19px"><span>1</span></div>
<div class="f l" style="left:340px;top:266px;width:42px"><span>G4-9702-2</span></div>
<div class="f l" style="left:384px;top:266px;width:20px"><span>1008</span></div>
<div class="f l" style="left:406px;top:266px;width:46px"><span>28.02.2014</span></div>
<div class="f r" style="left:454px;top:266px;width:68px"><span>250.00</span></div>
<div class="f l" style="left:523px;top:266px;width:20px"><span>CZK</span></div>
<div class="f r" style="left:545px;top:266px;width:67px"><span>0.00</span></div>
<div class="f l" style="left:614px;top:266px;width:21px"><span>CZK</span></div>
<div class="f l" style="left:637px;top:266px;width:69px"><span>sešity 2 - kopie</span></div>
<div class="f l" style="left:708px;top:266px;width:43px"><span>Uzavřená</span></div>
<div class="f l" style="left:753px;top:266px;width:33px;border-right:1px solid #f4f4f4;box-shadow:inset 1px 1px 0 #c3cbd8"><span>Vyúčtov</span></div>
<div class="f c" style="left:62px;top:281px;width:9px"><span>N</span></div>
<div class="f l" style="left:72px;top:281px;width:52px"><span>1401000002</span></div>
<div class="f l" style="left:124px;top:281px;width:50px;letter-spacing:-0.26px"><span></span></div>
<div class="f c" style="left:176px;top:281px;width:8px"><span>F</span></div>
<div class="f l" style="left:186px;top:281px;width:95px;letter-spacing:-0.38px;word-spacing:0.8px"><span>BBM S.R.O. Pobočka Praha</span></div>
<div class="f l" style="left:285px;top:281px;width:32px"><span>010105</span></div>
<div class="f r" style="left:319px;top:281px;width:19px"><span>1</span></div>
<div class="f l" style="left:340px;top:281px;width:42px"><span>G4-9702-2</span></div>
<div class="f l" style="left:384px;top:281px;width:20px"><span>1010</span></div>
<div class="f l" style="left:406px;top:281px;width:46px"><span>25.02.2014</span></div>
<div class="f r" style="left:454px;top:281px;width:68px"><span>3 000.00</span></div>
<div class="f l" style="left:523px;top:281px;width:20px"><span>CZK</span></div>
<div class="f r" style="left:545px;top:281px;width:67px"><span>2 375.00</span></div>
<div class="f l" style="left:614px;top:281px;width:21px"><span>CZK</span></div>
<div class="f l" style="left:637px;top:281px;width:69px"><span>sešity</span></div>
<div class="f l" style="left:708px;top:281px;width:43px"><span>Uzavřená</span></div>
<div class="f l" style="left:753px;top:281px;width:33px;border-right:1px solid #f4f4f4;box-shadow:inset 1px 1px 0 #c3cbd8"><span>Částečn</span></div>
<div class="f c" style="left:62px;top:296px;width:9px"><span>N</span></div>
<div class="f l" style="left:72px;top:296px;width:52px"><span>1401000001</span></div>
<div class="f l" style="left:124px;top:296px;width:50px;letter-spacing:-0.26px"><span></span></div>
<div class="f c" style="left:176px;top:296px;width:8px"><span>F</span></div>
<div class="f l" style="left:186px;top:296px;width:95px;letter-spacing:-0.38px;word-spacing:0.8px"><span>ZUREL</span></div>
<div class="f l" style="left:285px;top:296px;width:32px"><span>010105</span></div>
<div class="f r" style="left:319px;top:296px;width:19px"><span>1</span></div>
<div class="f l" style="left:340px;top:296px;width:42px"><span>Test NR</span></div>
<div class="f l" style="left:384px;top:296px;width:20px"><span>1008</span></div>
<div class="f l" style="left:406px;top:296px;width:46px"><span>07.02.2014</span></div>
<div class="f r" style="left:454px;top:296px;width:68px"><span>1 247.10</span></div>
<div class="f l" style="left:523px;top:296px;width:20px"><span>CZK</span></div>
<div class="f r" style="left:545px;top:296px;width:67px"><span>1 247.10</span></div>
<div class="f l" style="left:614px;top:296px;width:21px"><span>CZK</span></div>
<div class="f l" style="left:637px;top:296px;width:69px"><span></span></div>
<div class="f l" style="left:708px;top:296px;width:43px"><span>Požadavek</span></div>
<div class="f l" style="left:753px;top:296px;width:33px;border-right:1px solid #f4f4f4;box-shadow:inset 1px 1px 0 #c3cbd8"><span>Nevyúčt</span></div>
<div class="f c" style="left:62px;top:312px;width:9px"><span>N</span></div>
<div class="f l" style="left:72px;top:312px;width:52px"><span>1400100001</span></div>
<div class="f l" style="left:124px;top:312px;width:50px;letter-spacing:-0.26px"><span></span></div>
<div class="f c" style="left:176px;top:312px;width:8px"><span>F</span></div>
<div class="f l" style="left:186px;top:312px;width:95px;letter-spacing:-0.38px;word-spacing:0.8px"><span>AB STUDIO</span></div>
<div class="f l" style="left:285px;top:312px;width:32px"><span>1</span></div>
<div class="f r" style="left:319px;top:312px;width:19px"><span>22</span></div>
<div class="f l" style="left:340px;top:312px;width:42px"><span>048 313 Int</span></div>
<div class="f l" style="left:384px;top:312px;width:20px"><span>1007</span></div>
<div class="f l" style="left:406px;top:312px;width:46px"><span>11.07.2014</span></div>
<div class="f r" style="left:454px;top:312px;width:68px"><span></span></div>
<div class="f l" style="left:523px;top:312px;width:20px"><span>CZK</span></div>
<div class="f r" style="left:545px;top:312px;width:67px"><span></span></div>
<div class="f l" style="left:614px;top:312px;width:21px"><span>CZK</span></div>
<div class="f l" style="left:637px;top:312px;width:69px"><span></span></div>
<div class="f l" style="left:708px;top:312px;width:43px"><span>Požadavek</span></div>
<div class="f l" style="left:753px;top:312px;width:33px;border-right:1px solid #f4f4f4;box-shadow:inset 1px 1px 0 #c3cbd8"><span>Nevyúčt</span></div>
<div class="f c" style="left:62px;top:327px;width:9px"><span>N</span></div>
<div class="f l" style="left:72px;top:327px;width:52px"><span>1400000001</span></div>
<div class="f l" style="left:124px;top:327px;width:50px;letter-spacing:-0.26px"><span></span></div>
<div class="f c" style="left:176px;top:327px;width:8px"><span>F</span></div>
<div class="f l" style="left:186px;top:327px;width:95px;letter-spacing:-0.38px;word-spacing:0.8px"><span>BBM S.R.O. Pobočka Praha</span></div>
<div class="f l" style="left:285px;top:327px;width:32px"><span></span></div>
<div class="f r" style="left:319px;top:327px;width:19px"><span></span></div>
<div class="f l" style="left:340px;top:327px;width:42px"><span></span></div>
<div class="f l" style="left:384px;top:327px;width:20px"><span>1010</span></div>
<div class="f l" style="left:406px;top:327px;width:46px"><span>11.06.2014</span></div>
<div class="f r" style="left:454px;top:327px;width:68px"><span>100.00</span></div>
<div class="f l" style="left:523px;top:327px;width:20px"><span>CZK</span></div>
<div class="f r" style="left:545px;top:327px;width:67px"><span>100.00</span></div>
<div class="f l" style="left:614px;top:327px;width:21px"><span>CZK</span></div>
<div class="f l" style="left:637px;top:327px;width:69px"><span></span></div>
<div class="f l" style="left:708px;top:327px;width:43px"><span>Uzavřená</span></div>
<div class="f l" style="left:753px;top:327px;width:33px;border-right:1px solid #f4f4f4;box-shadow:inset 1px 1px 0 #c3cbd8"><span>Nevyúčt</span></div>
<div class="f c" style="left:62px;top:342px;width:9px"><span>N</span></div>
<div class="f l" style="left:72px;top:342px;width:52px"><span>1410100002</span></div>
<div class="f l" style="left:124px;top:342px;width:50px;letter-spacing:-0.26px"><span>0000000376</span></div>
<div class="f c" style="left:176px;top:342px;width:8px"><span>F</span></div>
<div class="f l" style="left:186px;top:342px;width:95px;letter-spacing:-0.38px;word-spacing:0.8px"><span>BBM S.R.O.</span></div>
<div class="f l" style="left:285px;top:342px;width:32px"><span>101</span></div>
<div class="f r" style="left:319px;top:342px;width:19px"><span>1</span></div>
<div class="f l" style="left:340px;top:342px;width:42px"><span>Test Petřík</span></div>
<div class="f l" style="left:384px;top:342px;width:20px"><span>9999</span></div>
<div class="f l" style="left:406px;top:342px;width:46px"><span>03.04.2014</span></div>
<div class="f r" style="left:454px;top:342px;width:68px"><span>3 000.00</span></div>
<div class="f l" style="left:523px;top:342px;width:20px"><span>CZK</span></div>
<div class="f r" style="left:545px;top:342px;width:67px"><span>3 000.00</span></div>
<div class="f l" style="left:614px;top:342px;width:21px"><span>CZK</span></div>
<div class="f l" style="left:637px;top:342px;width:69px"><span></span></div>
<div class="f l" style="left:708px;top:342px;width:43px"><span>Požadavek</span></div>
<div class="f l" style="left:753px;top:342px;width:33px;border-right:1px solid #f4f4f4;box-shadow:inset 1px 1px 0 #c3cbd8"><span>Nevyúčt</span></div>
<div class="f c" style="left:62px;top:357px;width:9px"><span>N</span></div>
<div class="f l" style="left:72px;top:357px;width:52px"><span>1410100002</span></div>
<div class="f l" style="left:124px;top:357px;width:50px;letter-spacing:-0.26px"><span>0000000375</span></div>
<div class="f c" style="left:176px;top:357px;width:8px"><span>F</span></div>
<div class="f l" style="left:186px;top:357px;width:95px;letter-spacing:-0.38px;word-spacing:0.8px"><span>BBM S.R.O.</span></div>
<div class="f l" style="left:285px;top:357px;width:32px"><span>101</span></div>
<div class="f r" style="left:319px;top:357px;width:19px"><span>1</span></div>
<div class="f l" style="left:340px;top:357px;width:42px"><span>Test Petřík</span></div>
<div class="f l" style="left:384px;top:357px;width:20px"><span>9999</span></div>
<div class="f l" style="left:406px;top:357px;width:46px"><span>03.04.2014</span></div>
<div class="f r" style="left:454px;top:357px;width:68px"><span>2 000.00</span></div>
<div class="f l" style="left:523px;top:357px;width:20px"><span>CZK</span></div>
<div class="f r" style="left:545px;top:357px;width:67px"><span>2 000.00</span></div>
<div class="f l" style="left:614px;top:357px;width:21px"><span>CZK</span></div>
<div class="f l" style="left:637px;top:357px;width:69px"><span></span></div>
<div class="f l" style="left:708px;top:357px;width:43px"><span>Požadavek</span></div>
<div class="f l" style="left:753px;top:357px;width:33px;border-right:1px solid #f4f4f4;box-shadow:inset 1px 1px 0 #c3cbd8"><span>Nevyúčt</span></div>
<div class="f c" style="left:62px;top:372px;width:9px"><span>N</span></div>
<div class="f l" style="left:72px;top:372px;width:52px"><span>1401000013</span></div>
<div class="f l" style="left:124px;top:372px;width:50px;letter-spacing:-0.26px"><span>0000000374</span></div>
<div class="f c" style="left:176px;top:372px;width:8px"><span>F</span></div>
<div class="f l" style="left:186px;top:372px;width:95px;letter-spacing:-0.38px;word-spacing:0.8px"><span>ALEXIM</span></div>
<div class="f l" style="left:285px;top:372px;width:32px"><span>220</span></div>
<div class="f r" style="left:319px;top:372px;width:19px"><span>1</span></div>
<div class="f l" style="left:340px;top:372px;width:42px"><span>0304 AKCE</span></div>
<div class="f l" style="left:384px;top:372px;width:20px"><span>9999</span></div>
<div class="f l" style="left:406px;top:372px;width:46px"><span>03.04.2014</span></div>
<div class="f r" style="left:454px;top:372px;width:68px"><span>1 250.00</span></div>
<div class="f l" style="left:523px;top:372px;width:20px"><span>CZK</span></div>
<div class="f r" style="left:545px;top:372px;width:67px"><span>1 250.00</span></div>
<div class="f l" style="left:614px;top:372px;width:21px"><span>CZK</span></div>
<div class="f l" style="left:637px;top:372px;width:69px"><span></span></div>
<div class="f l" style="left:708px;top:372px;width:43px"><span>Požadavek</span></div>
<div class="f l" style="left:753px;top:372px;width:33px;border-right:1px solid #f4f4f4;box-shadow:inset 1px 1px 0 #c3cbd8"><span>Nevyúčt</span></div>
<div class="f c" style="left:62px;top:387px;width:9px"><span>N</span></div>
<div class="f l" style="left:72px;top:387px;width:52px"><span>1401000013</span></div>
<div class="f l" style="left:124px;top:387px;width:50px;letter-spacing:-0.26px"><span>0000000373</span></div>
<div class="f c" style="left:176px;top:387px;width:8px"><span>F</span></div>
<div class="f l" style="left:186px;top:387px;width:95px;letter-spacing:-0.38px;word-spacing:0.8px"><span>ALEXIM</span></div>
<div class="f l" style="left:285px;top:387px;width:32px"><span>190</span></div>
<div class="f r" style="left:319px;top:387px;width:19px"><span>1</span></div>
<div class="f l" style="left:340px;top:387px;width:42px"><span>0304 AKCE</span></div>
<div class="f l" style="left:384px;top:387px;width:20px"><span>9999</span></div>
<div class="f l" style="left:406px;top:387px;width:46px"><span>03.04.2014</span></div>
<div class="f r" style="left:454px;top:387px;width:68px"><span>28 000.00</span></div>
<div class="f l" style="left:523px;top:387px;width:20px"><span>CZK</span></div>
<div class="f r" style="left:545px;top:387px;width:67px"><span>28 000.00</span></div>
<div class="f l" style="left:614px;top:387px;width:21px"><span>CZK</span></div>
<div class="f l" style="left:637px;top:387px;width:69px"><span></span></div>
<div class="f l" style="left:708px;top:387px;width:43px"><span>Požadavek</span></div>
<div class="f l" style="left:753px;top:387px;width:33px;border-right:1px solid #f4f4f4;box-shadow:inset 1px 1px 0 #c3cbd8"><span>Nevyúčt</span></div>
<div class="f c" style="left:62px;top:402px;width:9px"><span>N</span></div>
<div class="f l" style="left:72px;top:402px;width:52px"><span>1401000013</span></div>
<div class="f l" style="left:124px;top:402px;width:50px;letter-spacing:-0.26px"><span>0000000372</span></div>
<div class="f c" style="left:176px;top:402px;width:8px"><span>F</span></div>
<div class="f l" style="left:186px;top:402px;width:95px;letter-spacing:-0.38px;word-spacing:0.8px"><span>ALEXIM</span></div>
<div class="f l" style="left:285px;top:402px;width:32px"><span>010106</span></div>
<div class="f r" style="left:319px;top:402px;width:19px"><span>1</span></div>
<div class="f l" style="left:340px;top:402px;width:42px"><span>0304 AKCE</span></div>
<div class="f l" style="left:384px;top:402px;width:20px"><span>9999</span></div>
<div class="f l" style="left:406px;top:402px;width:46px"><span>03.04.2014</span></div>
<div class="f r" style="left:454px;top:402px;width:68px"><span>25 000.00</span></div>
<div class="f l" style="left:523px;top:402px;width:20px"><span>CZK</span></div>
<div class="f r" style="left:545px;top:402px;width:67px"><span>25 000.00</span></div>
<div class="f l" style="left:614px;top:402px;width:21px"><span>CZK</span></div>
<div class="f l" style="left:637px;top:402px;width:69px"><span></span></div>
<div class="f l" style="left:708px;top:402px;width:43px"><span>Požadavek</span></div>
<div class="f l" style="left:753px;top:402px;width:33px;border-right:1px solid #f4f4f4;box-shadow:inset 1px 1px 0 #c3cbd8"><span>Nevyúčt</span></div>
<div class="f c" style="left:62px;top:417px;width:9px"><span>N</span></div>
<div class="f l" style="left:72px;top:417px;width:52px"><span>1419000006</span></div>
<div class="f l" style="left:124px;top:417px;width:50px;letter-spacing:-0.26px"><span>0000000371</span></div>
<div class="f c" style="left:176px;top:417px;width:8px"><span>F</span></div>
<div class="f l" style="left:186px;top:417px;width:95px;letter-spacing:-0.38px;word-spacing:0.8px"><span>BBM S.R.O. Pobočka Praha</span></div>
<div class="f l" style="left:285px;top:417px;width:32px"><span>220</span></div>
<div class="f r" style="left:319px;top:417px;width:19px"><span>1</span></div>
<div class="f l" style="left:340px;top:417px;width:42px"><span>0304 AKCE</span></div>
<div class="f l" style="left:384px;top:417px;width:20px"><span>9999</span></div>
<div class="f l" style="left:406px;top:417px;width:46px"><span>03.04.2014</span></div>
<div class="f r" style="left:454px;top:417px;width:68px"><span>2 500.00</span></div>
<div class="f l" style="left:523px;top:417px;width:20px"><span>CZK</span></div>
<div class="f r" style="left:545px;top:417px;width:67px"><span>2 500.00</span></div>
<div class="f l" style="left:614px;top:417px;width:21px"><span>CZK</span></div>
<div class="f l" style="left:637px;top:417px;width:69px"><span>bbbb</span></div>
<div class="f l" style="left:708px;top:417px;width:43px"><span>Schválená</span></div>
<div class="f l" style="left:753px;top:417px;width:33px;border-right:1px solid #f4f4f4;box-shadow:inset 1px 1px 0 #c3cbd8"><span>Nevyúčt</span></div>
<div class="f c" style="left:62px;top:432px;width:9px"><span>N</span></div>
<div class="f l" style="left:72px;top:432px;width:52px"><span>1419000006</span></div>
<div class="f l" style="left:124px;top:432px;width:50px;letter-spacing:-0.26px"><span>0000000370</span></div>
<div class="f c" style="left:176px;top:432px;width:8px"><span>F</span></div>
<div class="f l" style="left:186px;top:432px;width:95px;letter-spacing:-0.38px;word-spacing:0.8px"><span>BBM S.R.O. Pobočka Praha</span></div>
<div class="f l" style="left:285px;top:432px;width:32px"><span>190</span></div>
<div class="f r" style="left:319px;top:432px;width:19px"><span>1</span></div>
<div class="f l" style="left:340px;top:432px;width:42px"><span>0304 AKCE</span></div>
<div class="f l" style="left:384px;top:432px;width:20px"><span>9999</span></div>
<div class="f l" style="left:406px;top:432px;width:46px"><span>03.04.2014</span></div>
<div class="f r" style="left:454px;top:432px;width:68px"><span>2 500.00</span></div>
<div class="f l" style="left:523px;top:432px;width:20px"><span>CZK</span></div>
<div class="f r" style="left:545px;top:432px;width:67px"><span>2 500.00</span></div>
<div class="f l" style="left:614px;top:432px;width:21px"><span>CZK</span></div>
<div class="f l" style="left:637px;top:432px;width:69px"><span>bbbb</span></div>
<div class="f l" style="left:708px;top:432px;width:43px"><span>Schválená</span></div>
<div class="f l" style="left:753px;top:432px;width:33px;border-right:1px solid #f4f4f4;box-shadow:inset 1px 1px 0 #c3cbd8"><span>Nevyúčt</span></div>
<div class="f c" style="left:62px;top:447px;width:9px"><span>N</span></div>
<div class="f l" style="left:72px;top:447px;width:52px"><span>1401000012</span></div>
<div class="f l" style="left:124px;top:447px;width:50px;letter-spacing:-0.26px"><span>0000000369</span></div>
<div class="f c" style="left:176px;top:447px;width:8px"><span>F</span></div>
<div class="f l" style="left:186px;top:447px;width:95px;letter-spacing:-0.38px;word-spacing:0.8px"><span>A - CONNECT UNE SPOL</span></div>
<div class="f l" style="left:285px;top:447px;width:32px"><span>010106</span></div>
<div class="f r" style="left:319px;top:447px;width:19px"><span>1</span></div>
<div class="f l" style="left:340px;top:447px;width:42px"><span>Zakázka test</span></div>
<div class="f l" style="left:384px;top:447px;width:20px"><span>9999</span></div>
<div class="f l" style="left:406px;top:447px;width:46px"><span>03.04.2014</span></div>
<div class="f r" style="left:454px;top:447px;width:68px"><span>1 000.00</span></div>
<div class="f l" style="left:523px;top:447px;width:20px"><span>CZK</span></div>
<div class="f r" style="left:545px;top:447px;width:67px"><span>1 000.00</span></div>
<div class="f l" style="left:614px;top:447px;width:21px"><span>CZK</span></div>
<div class="f l" style="left:637px;top:447px;width:69px"><span></span></div>
<div class="f l" style="left:708px;top:447px;width:43px"><span>Potvrzená</span></div>
<div class="f l" style="left:753px;top:447px;width:33px;border-right:1px solid #f4f4f4;box-shadow:inset 1px 1px 0 #c3cbd8"><span>Nevyúčt</span></div>
<div class="f c" style="left:62px;top:462px;width:9px"><span>N</span></div>
<div class="f l" style="left:72px;top:462px;width:52px"><span>1401000012</span></div>
<div class="f l" style="left:124px;top:462px;width:50px;letter-spacing:-0.26px"><span>0000000368</span></div>
<div class="f c" style="left:176px;top:462px;width:8px"><span>F</span></div>
<div class="f l" style="left:186px;top:462px;width:95px;letter-spacing:-0.38px;word-spacing:0.8px"><span>A - CONNECT UNE SPOL</span></div>
<div class="f l" style="left:285px;top:462px;width:32px"><span>010106</span></div>
<div class="f r" style="left:319px;top:462px;width:19px"><span>1</span></div>
<div class="f l" style="left:340px;top:462px;width:42px"><span>Zakázka test</span></div>
<div class="f l" style="left:384px;top:462px;width:20px"><span>9999</span></div>
<div class="f l" style="left:406px;top:462px;width:46px"><span>03.04.2014</span></div>
<div class="f r" style="left:454px;top:462px;width:68px"><span>510.00</span></div>
<div class="f l" style="left:523px;top:462px;width:20px"><span>CZK</span></div>
<div class="f r" style="left:545px;top:462px;width:67px"><span>510.00</span></div>
<div class="f l" style="left:614px;top:462px;width:21px"><span>CZK</span></div>
<div class="f l" style="left:637px;top:462px;width:69px"><span></span></div>
<div class="f l" style="left:708px;top:462px;width:43px"><span>Potvrzená</span></div>
<div class="f l" style="left:753px;top:462px;width:33px;border-right:1px solid #f4f4f4;box-shadow:inset 1px 1px 0 #c3cbd8"><span>Nevyúčt</span></div>
<div class="h" style="left:374px;top:481.8px">Kontrolní součty</div>
<div class="kf" style="left:454px;width:67px"></div>
<div class="kf" style="left:545px;width:68px"></div>
<svg style="position:absolute;left:285px;top:501px" width="501" height="12" viewBox="0 0 501 12">
<rect x="0" y="0" width="501" height="12" fill="#8c9bb5"/>
<rect x="0.5" y="0.5" width="500" height="11" fill="none" stroke="#a9b5c8" stroke-width="1"/>
<path d="M6 1 L11 1 L11 11 L6 11 A5 5 0 0 1 6 1 Z" fill="#d6d6d6"/>
<path d="M6 2 A4 4 0 0 0 6 10" fill="none" stroke="#f6f6f6" stroke-width="1.2"/>
<polygon points="4.8,6 7.6,3.6 7.6,8.4" fill="#4d5d7a"/>
<rect x="11" y="1" width="64.5" height="10" fill="#d6d6d6"/>
<rect x="11.2" y="1" width="1.3" height="10" fill="#f8f8f8"/>
<rect x="11" y="1" width="64.5" height="0.8" fill="#e6e6e6"/>
<g fill="#f8f8f8"><circle cx="33.5" cy="8.3" r="0.9"/><circle cx="39" cy="8.3" r="0.9"/><circle cx="45" cy="8.3" r="0.9"/><circle cx="50.5" cy="8.3" r="0.9"/><circle cx="36.5" cy="4.5" r="0.9"/><circle cx="42" cy="4.5" r="0.9"/><circle cx="48" cy="4.5" r="0.9"/></g>
<path d="M489 1 L495 1 A5 5 0 0 1 495 11 L489 11 Z" fill="#d6d6d6"/>
<rect x="489" y="1" width="1" height="10" fill="#f4f4f4"/>
<polygon points="496.3,6 493.5,3.6 493.5,8.4" fill="#4d5d7a"/>
</svg>
<div class="btn" style="left:64px;width:70px">Pořízení</div>
<div class="btn" style="left:158px;width:70px">Kopie</div>
<div class="btn" style="left:252px;width:69px">Zrušení</div>
<div class="btn" style="left:346px;width:69px">Otevření</div>
<div class="btn dis" style="left:445px;width:69px">Navýšení</div>
<div class="btn" style="left:539px;width:69px">Opr. <u>u</u>zav.</div>
<div class="btn" style="left:717px;width:70px">Saldo</div>
<div id="redbox"></div>
<div id="status"></div>
<div id="spanel"></div>
<div id="sdiv"></div>
<div class="st" style="left:8px;top:548px">Číslo objednávky : 1401000014</div>
<div class="st" style="left:8px;top:563px">Záznam: 40/64</div>
<div class="vs" style="left:111px;top:563px;height:12px"></div>
<div class="vs" style="left:133px;top:563px;height:12px"></div>
<div class="vs" style="left:196px;top:563px;height:12px"></div>
<div class="vs" style="left:276px;top:563px;height:12px"></div>
<div class="vs" style="left:320px;top:563px;height:12px"></div>
<div class="vs" style="left:785px;top:547px;height:14px"></div>
<div class="st" style="left:183px;top:563px">...</div>
<div class="st" style="left:326px;top:563px">&lt;OSC&gt;</div>
</body></html>
